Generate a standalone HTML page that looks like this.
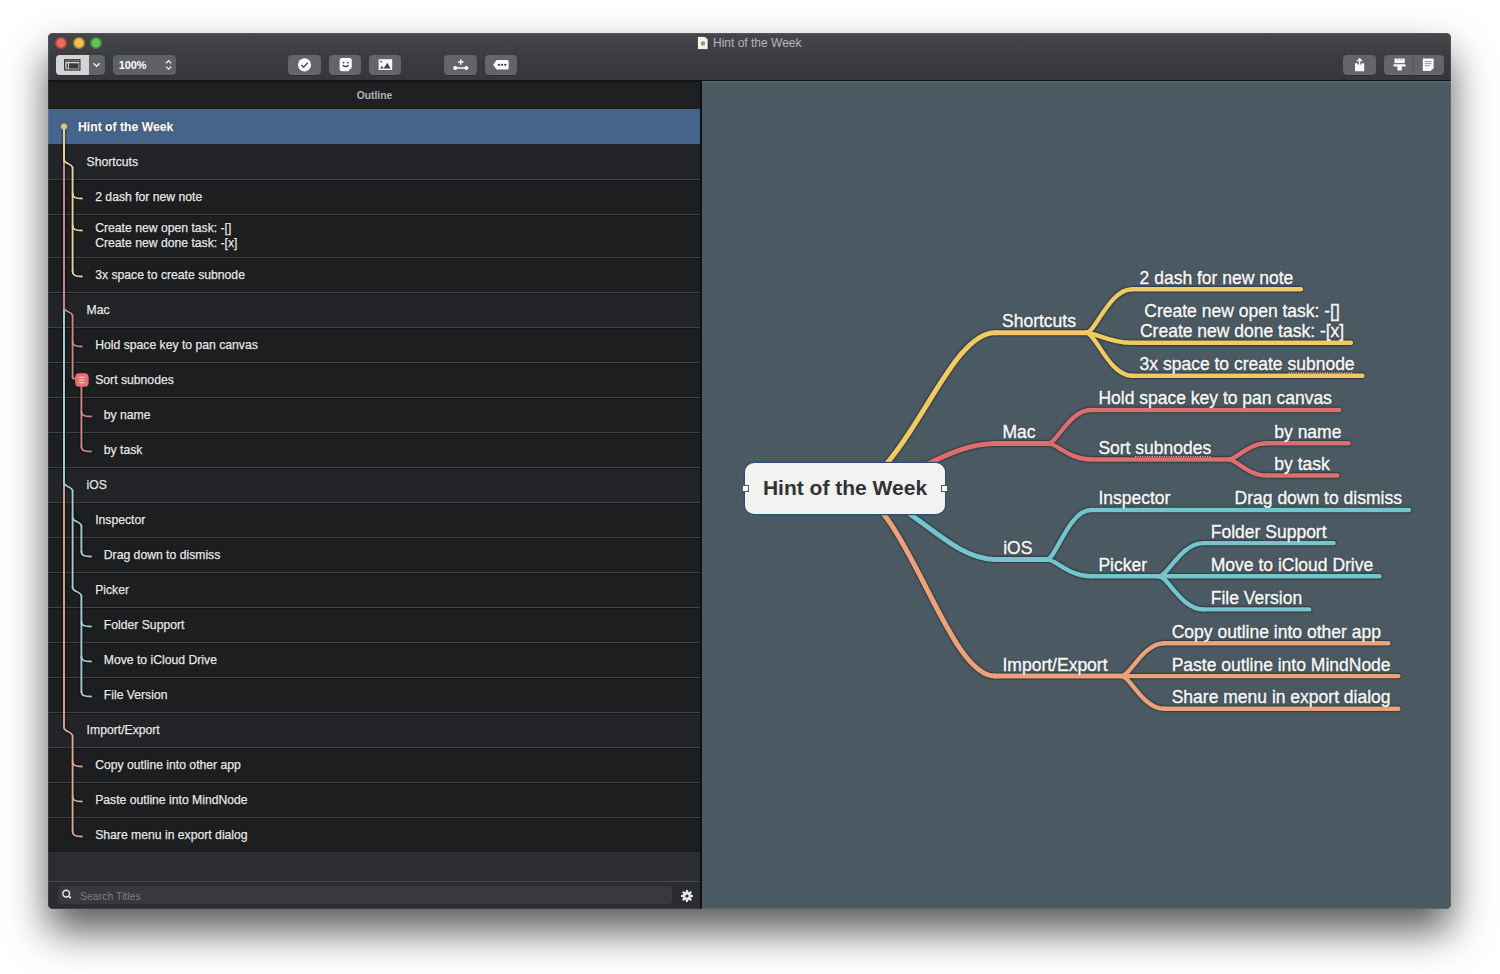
<!DOCTYPE html>
<html><head><meta charset="utf-8">
<style>
*{box-sizing:border-box;margin:0;padding:0}
html,body{width:1500px;height:974px;overflow:hidden;background:#fff;font-family:"Liberation Sans",sans-serif}
#win{position:absolute;left:48px;top:33px;width:1403px;height:876px;border-radius:5px 5px 5px 5px;overflow:hidden;background:#2b2c2f;box-shadow:0 22px 40px 0 rgba(0,0,0,0.65)}
#edge{position:absolute;left:0;top:0;width:1403px;height:876px;border-radius:5px;box-shadow:inset 0 0 0 1px rgba(255,255,255,0.09);pointer-events:none}
#tb{position:absolute;left:0;top:-1px;width:1403px;height:49px;background:linear-gradient(#46474b,#3a3b3e 60%,#36373a);border-bottom:1px solid #131416}
.tl{position:absolute;top:4.6px;width:12px;height:12px;border-radius:50%;border:1px solid rgba(0,0,0,0.3)}
.btn{position:absolute;top:23px;height:19.5px;border-radius:4px;background:#646568;box-shadow:0 0.5px 0 rgba(0,0,0,0.35)}
.btn svg{position:absolute;left:0;top:0}
#title{position:absolute;left:665px;top:4px;font-size:12px;color:#b6b7ba;white-space:nowrap}
#side{position:absolute;left:0;top:48px;width:653px;height:828px;background:#2b2c2f;overflow:hidden}
#hdr{position:absolute;left:0;top:0;width:653px;height:28px;background:#1f2022;border-top:1px solid #111214}
#hdr span{position:absolute;left:0;width:653px;text-align:center;top:7.5px;font-size:10.3px;font-weight:bold;color:#b1b2b5}
.row{position:absolute;left:0;width:653px;background:#1f2023}
.row.sel{background:#46648a}
.sep{position:absolute;left:0;width:653px;height:2px;border-top:1px solid #424346;background:#141517}
.ot{position:absolute;font-size:12.2px;color:#e8e8e8;white-space:nowrap;line-height:16px;-webkit-text-stroke:0.25px #e8e8e8;text-shadow:0 0 1.5px #000}
.ot.b{font-weight:bold;color:#fff}
#empty{position:absolute;left:0;top:770px;width:653px;height:31px;background:#2c2d30;border-bottom:1px solid #4a4b4e;border-top:1px solid #18191b}
#search{position:absolute;left:9.7px;top:805px;width:614px;height:17.5px;border-radius:4px;background:#38393c}
#search span{position:absolute;left:22.3px;top:3.6px;font-size:10.5px;color:#7c7d80}
#canvas{position:absolute;left:654px;top:48px;width:749px;height:828px;background:#4a5962;overflow:hidden;box-shadow:inset 0 3px 3px -2px rgba(255,255,255,0.1)}
#divider{position:absolute;left:652px;top:48px;width:2px;height:828px;background:#0e1214}
.ct{position:absolute;font-size:17.5px;color:#f7f7f7;white-space:nowrap;line-height:20px;-webkit-text-stroke:0.45px #f7f7f7;text-shadow:0 0 1.5px rgba(0,0,0,0.8)}
#rootnode{position:absolute;left:43px;top:381.5px;width:200px;height:51.5px;border-radius:9px;background:#f2f2f2;box-shadow:0 0 0 1.2px #2f4f70}
#rootnode span{position:absolute;left:0;width:200px;text-align:center;top:13px;font-size:21px;font-weight:bold;color:#333;line-height:24px}
#rootnode i{position:absolute;top:22.5px;width:7px;height:7px;background:#fff;border:1px solid #555}
</style></head>
<body>
<div id="win">
  <div id="tb">
    <div class="tl" style="left:7.3px;background:#ec6a5e;box-shadow:inset 0 0 0 0.6px #b94a3f"></div>
    <div class="tl" style="left:24.5px;background:#f3c04e;box-shadow:inset 0 0 0 0.6px #b58d2a"></div>
    <div class="tl" style="left:42.1px;background:#5fc452;box-shadow:inset 0 0 0 0.6px #3a8f31"></div>
    <svg style="position:absolute;left:648.7px;top:4.3px" width="12" height="14" viewBox="0 0 12 14"><path d="M0.5 0.5H8L11 3.5V13.5H0.5Z" fill="#f4f4f4" stroke="#222" stroke-width="0.6"/><circle cx="6" cy="7.5" r="2.2" fill="#8aa36a"/></svg>
    <div id="title">Hint of the Week</div>
    <!-- sidebar toggle -->
    <div class="btn" style="left:8.2px;width:49.3px;background:#626366">
      <div style="position:absolute;left:0;top:0;width:32.4px;height:19.5px;border-radius:4px 0 0 4px;background:#d4d4d6"></div>
      <svg width="50" height="20" viewBox="0 0 50 20"><rect x="8.7" y="4.8" width="15.2" height="10.2" fill="none" stroke="#2a2a2a" stroke-width="1.2"/><rect x="9.3" y="5.4" width="14" height="1.6" fill="#555"/><path d="M11.3 8.5V13.5" stroke="#2a2a2a" stroke-width="1.2"/><rect x="13" y="8.3" width="9.5" height="5.3" fill="#3a3a3a"/><path d="M37.5 8.2L40.6 11.2L43.7 8.2" fill="none" stroke="#f2f2f2" stroke-width="1.4"/></svg>
    </div>
    <!-- zoom -->
    <div class="btn" style="left:65.3px;width:62.5px;background:#5f6063">
      <span style="position:absolute;left:5.4px;top:4px;font-size:11px;color:#fff;font-weight:bold;letter-spacing:-0.1px">100%</span>
      <svg width="63" height="20" viewBox="0 0 63 20"><path d="M53 8.2L55.6 5.6L58.2 8.2M53 11.6L55.6 14.2L58.2 11.6" fill="none" stroke="#f2f2f2" stroke-width="1.3"/></svg>
    </div>
    <!-- check -->
    <div class="btn" style="left:240.2px;width:32.8px">
      <svg width="33" height="20" viewBox="0 0 33 20"><circle cx="16.5" cy="9.8" r="6.6" fill="#fafafa"/><path d="M13.3 10L15.6 12.2L19.7 7.8" fill="none" stroke="#505152" stroke-width="1.5"/></svg>
    </div>
    <!-- sticker -->
    <div class="btn" style="left:280.6px;width:32.8px">
      <svg width="33" height="20" viewBox="0 0 33 20"><path d="M10.6 5.2Q10.6 3 12.8 3H20.6Q22.8 3 22.8 5.2V13.3L19.6 16.2H12.8Q10.6 16.2 10.6 14Z" fill="#fafafa"/><circle cx="14.6" cy="7.6" r="0.9" fill="#3a3a3a"/><circle cx="18.8" cy="7.6" r="0.9" fill="#3a3a3a"/><path d="M13.8 10.3Q16.7 13 19.6 10.3" fill="none" stroke="#3a3a3a" stroke-width="1.2"/><path d="M19.8 15.7L22.5 13" stroke="#646568" stroke-width="0.9"/></svg>
    </div>
    <!-- image -->
    <div class="btn" style="left:321px;width:32.4px">
      <svg width="33" height="20" viewBox="0 0 33 20"><rect x="9.6" y="4.2" width="13.6" height="10.8" fill="#fafafa"/><path d="M14.5 13.5L18.3 7.8L21.6 13.5Z" fill="#444"/><path d="M11 13.5L12.8 11L14.8 13.5Z" fill="#444"/><circle cx="12.2" cy="6.6" r="0.9" fill="#555"/><path d="M11 5.3L13.3 7.6" stroke="#666" stroke-width="0.6"/></svg>
    </div>
    <!-- add -->
    <div class="btn" style="left:396.3px;width:33px">
      <svg width="33" height="20" viewBox="0 0 33 20"><path d="M16.8 4.4V9.8M14.1 7.1H19.5" stroke="#fafafa" stroke-width="1.5"/><path d="M11 13H22.6" stroke="#fafafa" stroke-width="1.6"/><circle cx="11.2" cy="13" r="2" fill="#fafafa"/><circle cx="22.4" cy="13" r="2" fill="#fafafa"/></svg>
    </div>
    <!-- tag -->
    <div class="btn" style="left:436.8px;width:32.6px">
      <svg width="33" height="20" viewBox="0 0 33 20"><path d="M8.2 9.8L11.6 5H22Q23.7 5 23.7 6.7V12.9Q23.7 14.6 22 14.6H11.6Z" fill="#fafafa"/><circle cx="13.9" cy="9.8" r="1.15" fill="#3a3a3a"/><circle cx="17.1" cy="9.8" r="1.15" fill="#3a3a3a"/><circle cx="20.3" cy="9.8" r="1.15" fill="#3a3a3a"/></svg>
    </div>
    <!-- share -->
    <div class="btn" style="left:1295.3px;width:32.7px">
      <svg width="33" height="20" viewBox="0 0 33 20"><path d="M12 8.3H14.6V9.6H18.6V8.3H21.2V16.2H12Z" fill="#fafafa"/><path d="M16.6 12.6V4.2M14.2 6.4L16.6 3.8L19 6.4" fill="none" stroke="#fafafa" stroke-width="1.4"/></svg>
    </div>
    <!-- segmented -->
    <div class="btn" style="left:1335.7px;width:60.3px">
      <div style="position:absolute;left:29.8px;top:0;width:1px;height:19.5px;background:#555659"></div>
      <svg width="61" height="20" viewBox="0 0 61 20"><rect x="10.5" y="3.5" width="10.2" height="4.6" fill="#fafafa"/><path d="M12.8 4.7H14.8M16.5 4.7H18.5" stroke="#777" stroke-width="0.6"/><path d="M9.6 9.2H21.6V11.4H17.8V15.6H13.4V11.4H9.6Z" fill="#fafafa"/><path d="M38.8 3.5H49.6V13.2L46.4 16H38.8Z" fill="#fafafa"/><path d="M40.8 6.5H47.6M40.8 8.6H47.6M40.8 10.7H45.5" stroke="#888" stroke-width="0.9"/></svg>
    </div>
  </div>
  <div id="side">
    <div id="hdr"><span>Outline</span></div>
    <div class="row sel" style="top:28px;height:35px"></div><div class="row" style="top:63px;height:35px;background:#232427"></div><div class="row" style="top:98px;height:35px;background:#1d1e20"></div><div class="row" style="top:133px;height:43px;background:#1d1e20"></div><div class="row" style="top:176px;height:35px;background:#1d1e20"></div><div class="row" style="top:211px;height:35px;background:#232427"></div><div class="row" style="top:246px;height:35px;background:#1d1e20"></div><div class="row" style="top:281px;height:35px;background:#1d1e20"></div><div class="row" style="top:316px;height:35px;background:#1d1e20"></div><div class="row" style="top:351px;height:35px;background:#1d1e20"></div><div class="row" style="top:386px;height:35px;background:#232427"></div><div class="row" style="top:421px;height:35px;background:#1d1e20"></div><div class="row" style="top:456px;height:35px;background:#1d1e20"></div><div class="row" style="top:491px;height:35px;background:#1d1e20"></div><div class="row" style="top:526px;height:35px;background:#1d1e20"></div><div class="row" style="top:561px;height:35px;background:#1d1e20"></div><div class="row" style="top:596px;height:35px;background:#1d1e20"></div><div class="row" style="top:631px;height:35px;background:#232427"></div><div class="row" style="top:666px;height:35px;background:#1d1e20"></div><div class="row" style="top:701px;height:35px;background:#1d1e20"></div><div class="row" style="top:736px;height:35px;background:#1d1e20"></div><div class="sep" style="top:98px"></div><div class="sep" style="top:133px"></div><div class="sep" style="top:176px"></div><div class="sep" style="top:211px"></div><div class="sep" style="top:246px"></div><div class="sep" style="top:281px"></div><div class="sep" style="top:316px"></div><div class="sep" style="top:351px"></div><div class="sep" style="top:386px"></div><div class="sep" style="top:421px"></div><div class="sep" style="top:456px"></div><div class="sep" style="top:491px"></div><div class="sep" style="top:526px"></div><div class="sep" style="top:561px"></div><div class="sep" style="top:596px"></div><div class="sep" style="top:631px"></div><div class="sep" style="top:666px"></div><div class="sep" style="top:701px"></div><div class="sep" style="top:736px"></div><div class="sep" style="top:771px"></div><span class="ot b" style="left:30px;top:38px">Hint of the Week</span><span class="ot" style="left:38.6px;top:72.8px">Shortcuts</span><span class="ot" style="left:47.2px;top:107.8px">2 dash for new note</span><span class="ot" style="left:47.2px;top:139.8px;line-height:15.6px">Create new open task: -[]<br>Create new done task: -[x]</span><span class="ot" style="left:47.2px;top:185.8px">3x space to create subnode</span><span class="ot" style="left:38.6px;top:220.8px">Mac</span><span class="ot" style="left:47.2px;top:255.8px">Hold space key to pan canvas</span><span class="ot" style="left:47.2px;top:290.8px">Sort subnodes</span><span class="ot" style="left:55.8px;top:325.8px">by name</span><span class="ot" style="left:55.8px;top:360.8px">by task</span><span class="ot" style="left:38.6px;top:395.8px">iOS</span><span class="ot" style="left:47.2px;top:430.8px">Inspector</span><span class="ot" style="left:55.8px;top:465.8px">Drag down to dismiss</span><span class="ot" style="left:47.2px;top:500.8px">Picker</span><span class="ot" style="left:55.8px;top:535.8px">Folder Support</span><span class="ot" style="left:55.8px;top:570.8px">Move to iCloud Drive</span><span class="ot" style="left:55.8px;top:605.8px">File Version</span><span class="ot" style="left:38.6px;top:640.8px">Import/Export</span><span class="ot" style="left:47.2px;top:675.8px">Copy outline into other app</span><span class="ot" style="left:47.2px;top:710.8px">Paste outline into MindNode</span><span class="ot" style="left:47.2px;top:745.8px">Share menu in export dialog</span><svg class="tree" width="1500" height="974" viewBox="0 0 1500 974" style="position:absolute;left:-48px;top:-81px"><g fill="none" stroke-width="1.9" stroke-linecap="round" style="filter:drop-shadow(0 0 0.8px #000)"><path d="M64 127V727.5" stroke="#daa992"/><path d="M64 127V482.5" stroke="#a2cbd2"/><path d="M64 127V307.5" stroke="#cd848c"/><path d="M64 127V159.5" stroke="#e6d29e"/><path d="M64 159.49C64 164 72.6 163.5 72.6 168" stroke="#e6d29e"/><path d="M72.6 168V271.5" stroke="#e6d29e"/><path d="M72.6 193.5C72.6 197.5 75.6 198.5 81.8 198.5" stroke="#e6d29e"/><path d="M72.6 225.5C72.6 229.5 75.6 230.5 81.8 230.5" stroke="#e6d29e"/><path d="M72.6 271.5C72.6 275.5 75.6 276.5 81.8 276.5" stroke="#e6d29e"/><path d="M64 307.49C64 312 72.6 311.5 72.6 316" stroke="#cd848c"/><path d="M72.6 316V376.5" stroke="#cd848c"/><path d="M72.6 341.5C72.6 345.5 75.6 346.5 81.8 346.5" stroke="#cd848c"/><path d="M72.6 376.5C72.6 379.5 73.6 378.5 77.6 378.5" stroke="#cd848c"/><path d="M81.4 383.5V446.5" stroke="#cd848c"/><path d="M81.4 411.5C81.4 415.5 84.4 416.5 91 416.5" stroke="#cd848c"/><path d="M81.4 446.5C81.4 450.5 84.4 451.5 91 451.5" stroke="#cd848c"/><path d="M64 482.49C64 487 72.6 486.5 72.6 491" stroke="#a2cbd2"/><path d="M72.6 491V587.5" stroke="#a2cbd2"/><path d="M72.6 517.49C72.6 522 81.4 521.5 81.4 526" stroke="#a2cbd2"/><path d="M81.4 526V551.5" stroke="#a2cbd2"/><path d="M81.4 551.5C81.4 555.5 84.4 556.5 91 556.5" stroke="#a2cbd2"/><path d="M72.6 587.49C72.6 592 81.4 591.5 81.4 596" stroke="#a2cbd2"/><path d="M81.4 596V691.5" stroke="#a2cbd2"/><path d="M81.4 621.5C81.4 625.5 84.4 626.5 91 626.5" stroke="#a2cbd2"/><path d="M81.4 656.5C81.4 660.5 84.4 661.5 91 661.5" stroke="#a2cbd2"/><path d="M81.4 691.5C81.4 695.5 84.4 696.5 91 696.5" stroke="#a2cbd2"/><path d="M64 727.49C64 732 72.6 731.5 72.6 736" stroke="#daa992"/><path d="M72.6 736V831.5" stroke="#daa992"/><path d="M72.6 761.5C72.6 765.5 75.6 766.5 81.8 766.5" stroke="#daa992"/><path d="M72.6 796.5C72.6 800.5 75.6 801.5 81.8 801.5" stroke="#daa992"/><path d="M72.6 831.5C72.6 835.5 75.6 836.5 81.8 836.5" stroke="#daa992"/></g><circle cx="64" cy="126.6" r="3.1" fill="#e3c37a"/><rect x="75.2" y="373.2" width="13.4" height="13.6" rx="4" fill="#e66f77"/><path d="M79.3 377.3h5.2M79.3 380h5.2M79.3 382.7h5.2" stroke="#fbd6d8" stroke-width="1.1"/></svg>
    <div id="empty"></div>
    <div id="search">
      <svg style="position:absolute;left:0;top:0" width="30" height="18" viewBox="0 0 30 18"><circle cx="8.2" cy="7.6" r="3.4" fill="none" stroke="#e8e8e8" stroke-width="1.5"/><path d="M10.6 10L12.8 12.2" stroke="#e8e8e8" stroke-width="1.7"/></svg>
      <span>Search Titles</span>
    </div>
    <svg style="position:absolute;left:632px;top:807.5px" width="14" height="14" viewBox="0 0 14 14"><g fill="#e6e6e6"><circle cx="7" cy="7" r="4.2"/><path d="M6 1H8L8.3 3.5H5.7ZM6 13H8L8.3 10.5H5.7ZM1 6V8L3.5 8.3V5.7ZM13 6V8L10.5 8.3V5.7Z"/><path d="M6 1H8L8.3 3.5H5.7ZM6 13H8L8.3 10.5H5.7ZM1 6V8L3.5 8.3V5.7ZM13 6V8L10.5 8.3V5.7Z" transform="rotate(45 7 7)"/></g><circle cx="7" cy="7" r="1.6" fill="#2b2c2f"/></svg>
  </div>
  <div id="divider"></div>
  <div id="canvas"><svg width="1500" height="974" viewBox="0 0 1500 974" style="position:absolute;left:-702px;top:-81px"><g fill="none" stroke-linecap="round" style="filter:drop-shadow(0 0 0.9px rgba(0,0,0,0.85))"><path d="M845 488.25C904 488.25 945 332.7 995 332.7" stroke="#efcb62" stroke-width="5"/><path d="M995 332.7H1086.3" stroke="#efcb62" stroke-width="5"/><path d="M845 488.25C904 488.25 945 443.4 995 443.4" stroke="#dc6e70" stroke-width="5"/><path d="M995 443.4H1048.2" stroke="#dc6e70" stroke-width="5"/><path d="M845 488.25C904 488.25 945 559.4 995 559.4" stroke="#76c4cc" stroke-width="5"/><path d="M995 559.4H1046.9" stroke="#76c4cc" stroke-width="5"/><path d="M845 488.25C904 488.25 945 676.1 995 676.1" stroke="#eba27a" stroke-width="5"/><path d="M995 676.1H1121.6" stroke="#eba27a" stroke-width="5"/><path d="M1086.3 332.7C1095.46 332.7 1109.2 289.2 1132.1 289.2" stroke="#efcb62" stroke-width="4.4"/><path d="M1132.1 289.2H1301" stroke="#efcb62" stroke-width="4.4"/><path d="M1086.3 332.7C1095.46 332.7 1109.2 342.8 1132.1 342.8" stroke="#efcb62" stroke-width="4.4"/><path d="M1132.1 342.8H1351" stroke="#efcb62" stroke-width="4.4"/><path d="M1086.3 332.7C1095.46 332.7 1109.2 375.8 1132.1 375.8" stroke="#efcb62" stroke-width="4.4"/><path d="M1132.1 375.8H1362.5" stroke="#efcb62" stroke-width="4.4"/><path d="M1048.2 443.4C1056.74 443.4 1069.55 410 1090.9 410" stroke="#dc6e70" stroke-width="4.4"/><path d="M1090.9 410H1339.4" stroke="#dc6e70" stroke-width="4.4"/><path d="M1048.2 443.4C1056.74 443.4 1069.55 459.5 1090.9 459.5" stroke="#dc6e70" stroke-width="4.4"/><path d="M1090.9 459.5H1228.8" stroke="#dc6e70" stroke-width="4.4"/><path d="M1228.8 459.5C1236.4 459.5 1247.8 443.3 1266.8 443.3" stroke="#dc6e70" stroke-width="4.4"/><path d="M1266.8 443.3H1348.6" stroke="#dc6e70" stroke-width="4.4"/><path d="M1228.8 459.5C1236.4 459.5 1247.8 475.5 1266.8 475.5" stroke="#dc6e70" stroke-width="4.4"/><path d="M1266.8 475.5H1337.4" stroke="#dc6e70" stroke-width="4.4"/><path d="M1046.9 559.4C1055.7 559.4 1068.9 510 1090.9 510" stroke="#76c4cc" stroke-width="4.4"/><path d="M1090.9 510H1409" stroke="#76c4cc" stroke-width="4.4"/><path d="M1046.9 559.4C1055.7 559.4 1068.9 576.3 1090.9 576.3" stroke="#76c4cc" stroke-width="4.4"/><path d="M1090.9 576.3H1159" stroke="#76c4cc" stroke-width="4.4"/><path d="M1159 576.3C1167.86 576.3 1181.15 543.1 1203.3 543.1" stroke="#76c4cc" stroke-width="4.4"/><path d="M1203.3 543.1H1333.6" stroke="#76c4cc" stroke-width="4.4"/><path d="M1159 576.3C1167.86 576.3 1181.15 576.3 1203.3 576.3" stroke="#76c4cc" stroke-width="4.4"/><path d="M1203.3 576.3H1379.5" stroke="#76c4cc" stroke-width="4.4"/><path d="M1159 576.3C1167.86 576.3 1181.15 609.4 1203.3 609.4" stroke="#76c4cc" stroke-width="4.4"/><path d="M1203.3 609.4H1309.3" stroke="#76c4cc" stroke-width="4.4"/><path d="M1121.6 676.1C1130.12 676.1 1142.9 643.2 1164.2 643.2" stroke="#eba27a" stroke-width="4.4"/><path d="M1164.2 643.2H1388.4" stroke="#eba27a" stroke-width="4.4"/><path d="M1121.6 676.1C1130.12 676.1 1142.9 676.1 1164.2 676.1" stroke="#eba27a" stroke-width="4.4"/><path d="M1164.2 676.1H1398.4" stroke="#eba27a" stroke-width="4.4"/><path d="M1121.6 676.1C1130.12 676.1 1142.9 708.8 1164.2 708.8" stroke="#eba27a" stroke-width="4.4"/><path d="M1164.2 708.8H1398.4" stroke="#eba27a" stroke-width="4.4"/><path d="M1288.5 373H1353.5" stroke="#f2b0a0" stroke-width="1.3" stroke-dasharray="1.2 1.2" stroke-linecap="butt"/><path d="M1135 456.7H1211.5" stroke="#f4a8a8" stroke-width="1.3" stroke-dasharray="1.2 1.2" stroke-linecap="butt"/></g></svg><span class="ct" style="left:300px;top:230.1px">Shortcuts</span><span class="ct" style="left:300.4px;top:340.8px">Mac</span><span class="ct" style="left:301.2px;top:456.8px">iOS</span><span class="ct" style="left:300.5px;top:573.5px">Import/Export</span><span class="ct" style="left:437.6px;top:186.6px">2 dash for new note</span><span class="ct" style="left:437.6px;width:205px;text-align:center;line-height:20px;top:220.1px">Create new open task: -[]<br>Create new done task: -[x]</span><span class="ct" style="left:437.6px;top:273.2px">3x space to create subnode</span><span class="ct" style="left:396.4px;top:307.4px">Hold space key to pan canvas</span><span class="ct" style="left:396.4px;top:356.9px">Sort subnodes</span><span class="ct" style="left:572.3px;top:340.7px">by name</span><span class="ct" style="left:572.3px;top:372.9px">by task</span><span class="ct" style="left:396.4px;top:407.4px">Inspector</span><span class="ct" style="left:532.6px;top:407.4px">Drag down to dismiss</span><span class="ct" style="left:396.4px;top:473.7px">Picker</span><span class="ct" style="left:508.8px;top:440.5px">Folder Support</span><span class="ct" style="left:508.8px;top:473.7px">Move to iCloud Drive</span><span class="ct" style="left:508.8px;top:506.8px">File Version</span><span class="ct" style="left:469.7px;top:540.6px">Copy outline into other app</span><span class="ct" style="left:469.7px;top:573.5px">Paste outline into MindNode</span><span class="ct" style="left:469.7px;top:606.2px">Share menu in export dialog</span><div id="rootnode"><span>Hint of the Week</span><i style="left:-3px"></i><i style="right:-3px"></i></div></div>
  <div id="edge"></div>
</div>
</body></html>
